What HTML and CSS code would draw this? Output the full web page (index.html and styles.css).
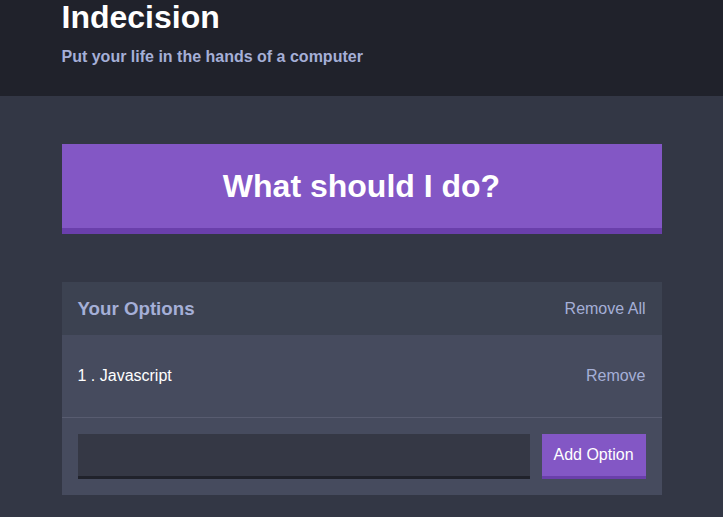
FILE: index.html
```html
<!DOCTYPE html>
<html lang="en">
<head>
<meta charset="utf-8">
<title>Indecision</title>
<link rel="stylesheet" href="styles.css">
</head>
<body>
<header class="header">
  <div class="container">
    <h1 class="header__title">Indecision</h1>
    <h2 class="header__subtitle">Put your life in the hands of a computer</h2>
  </div>
</header>
<main class="container">
  <button class="big-button">What should I do?</button>
  <section class="widget">
    <div class="widget-header">
      <h3 class="widget-header__title">Your Options</h3>
      <button class="button--link">Remove All</button>
    </div>
    <div class="option">
      <p class="option__text">1 . Javascript</p>
      <button class="button--link">Remove</button>
    </div>
    <form class="add-option">
      <input class="add-option__input" type="text" name="option">
      <button class="button" type="button">Add Option</button>
    </form>
  </section>
</main>
</body>
</html>
```
FILE: styles.css
```css
* { box-sizing: border-box; }
html, body {
  margin: 0;
  padding: 0;
}
body {
  background: #333745;
  font-family: "Liberation Sans", Arial, Helvetica, sans-serif;
  font-size: 16px;
  color: #ffffff;
  height: 517px;
  overflow: hidden;
}
.container {
  width: 600px;
  margin: 0 auto;
}
.header {
  background: #20222b;
  height: 96px;
  margin-bottom: 48px;
  display: flow-root;
}
.header__title {
  font-size: 32px;
  font-weight: bold;
  margin: 0;
  line-height: 35px;
}
.header__subtitle {
  color: #a5afd7;
  font-size: 16px;
  font-weight: bold;
  margin: 13px 0 0;
  line-height: normal;
}
.big-button {
  display: block;
  width: 100%;
  background: #8357c5;
  border: none;
  border-bottom: 6px solid #6a3fab;
  color: #ffffff;
  font-family: inherit;
  font-size: 32px;
  font-weight: bold;
  padding: 24px;
  height: 90px;
  line-height: 36px;
  margin-bottom: 48px;
  cursor: pointer;
}
.widget {
  background: #464b5e;
}
.widget-header {
  background: #3c4251;
  display: flex;
  justify-content: space-between;
  align-items: center;
  padding: 16px;
  height: 53px;
}
.widget-header__title {
  color: #a5afd7;
  font-size: 18.72px;
  font-weight: bold;
  margin: 0;
}
.button--link {
  background: none;
  border: none;
  color: #a5afd7;
  font-family: inherit;
  font-size: 16px;
  padding: 0;
  cursor: pointer;
}
.option {
  display: flex;
  justify-content: space-between;
  align-items: center;
  padding: 16px;
  border-bottom: 1px solid #585c70;
  height: 83px;
}
.option__text {
  margin: 16px 0;
  color: #ffffff;
}
.add-option {
  display: flex;
  padding: 16px;
  margin: 0;
}
.add-option__input {
  flex-grow: 1;
  background: #353845;
  border: none;
  border-bottom: 3px solid #20222b;
  color: #a5afd7;
  font-family: inherit;
  font-size: 16px;
  padding: 12px;
  height: 45px;
  margin-right: 12px;
  outline: none;
}
.button {
  background: #8357c5;
  border: none;
  border-bottom: 3px solid #6a3fab;
  color: #ffffff;
  font-family: inherit;
  font-size: 16px;
  padding: 0 12px;
  height: 45px;
  width: 104px;
  white-space: nowrap;
  flex-shrink: 0;
  cursor: pointer;
}
```
